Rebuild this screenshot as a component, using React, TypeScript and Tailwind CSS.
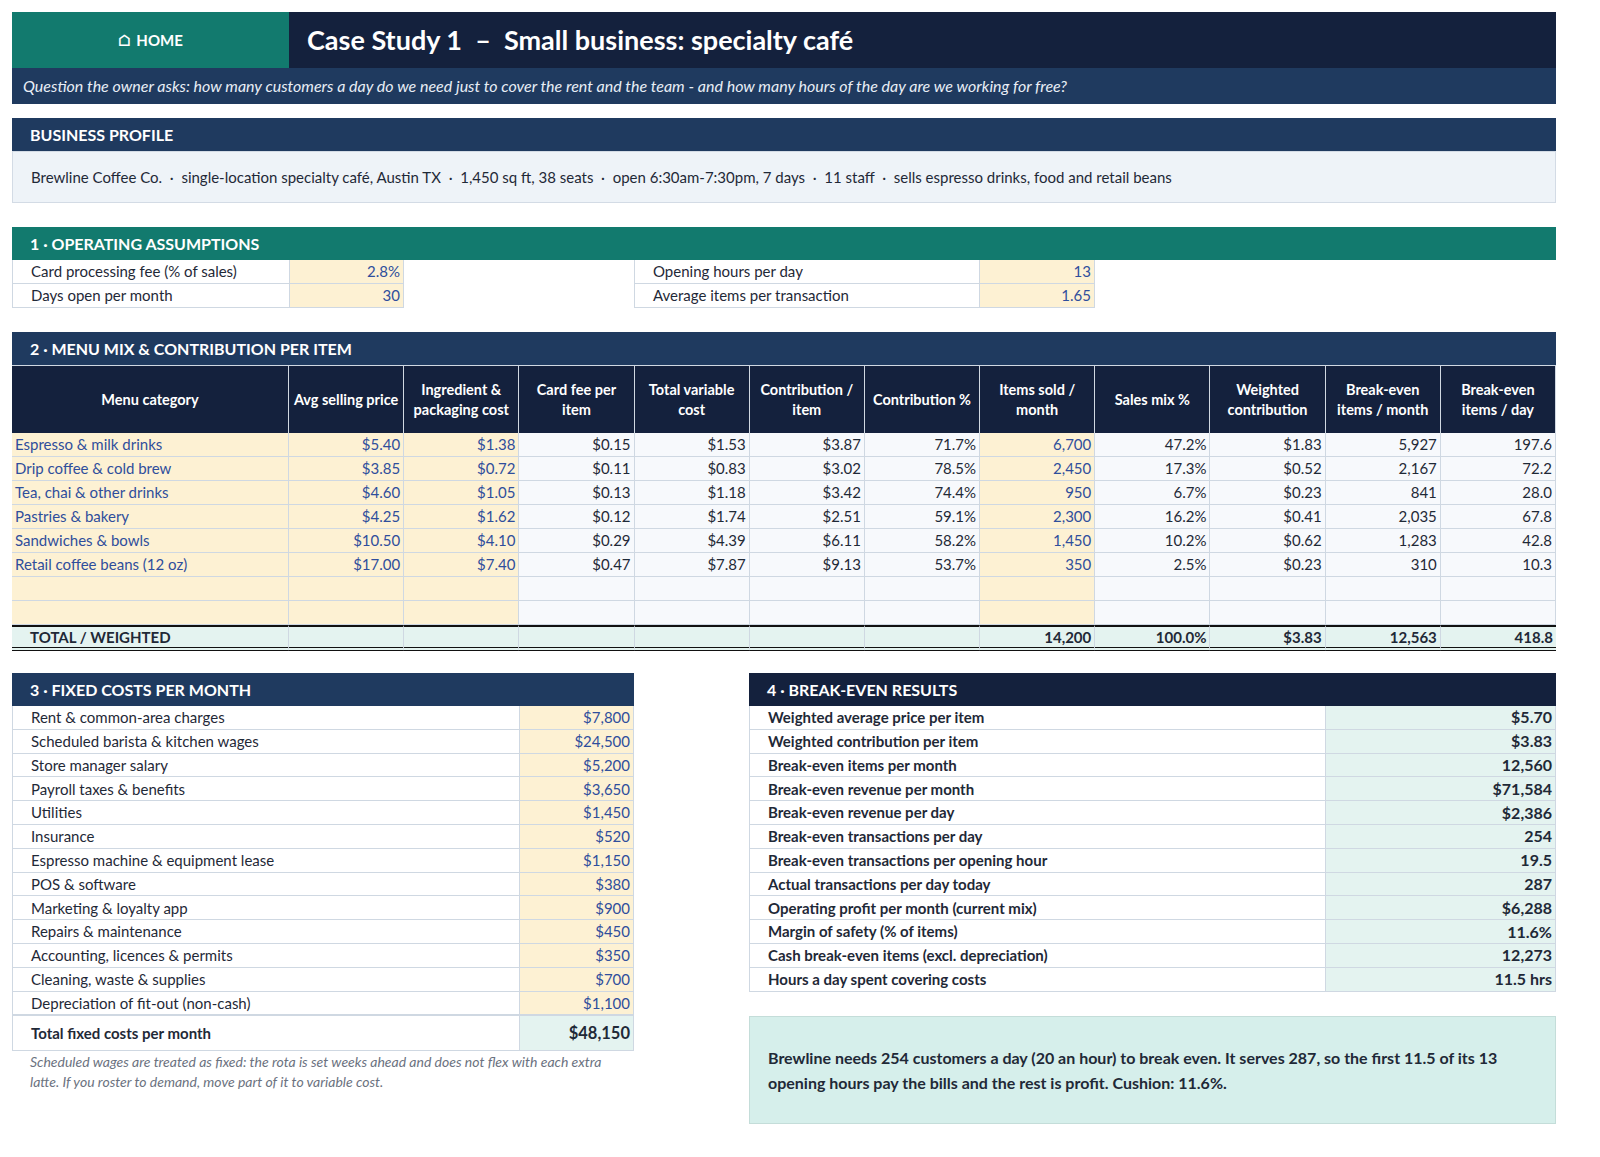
const menu = [
  ["Espresso & milk drinks", "$5.40", "$1.38", "$0.15", "$1.53", "$3.87", "71.7%", "6,700", "47.2%", "$1.83", "5,927", "197.6"],
  ["Drip coffee & cold brew", "$3.85", "$0.72", "$0.11", "$0.83", "$3.02", "78.5%", "2,450", "17.3%", "$0.52", "2,167", "72.2"],
  ["Tea, chai & other drinks", "$4.60", "$1.05", "$0.13", "$1.18", "$3.42", "74.4%", "950", "6.7%", "$0.23", "841", "28.0"],
  ["Pastries & bakery", "$4.25", "$1.62", "$0.12", "$1.74", "$2.51", "59.1%", "2,300", "16.2%", "$0.41", "2,035", "67.8"],
  ["Sandwiches & bowls", "$10.50", "$4.10", "$0.29", "$4.39", "$6.11", "58.2%", "1,450", "10.2%", "$0.62", "1,283", "42.8"],
  ["Retail coffee beans (12 oz)", "$17.00", "$7.40", "$0.47", "$7.87", "$9.13", "53.7%", "350", "2.5%", "$0.23", "310", "10.3"],
  ["", "", "", "", "", "", "", "", "", "", "", ""],
  ["", "", "", "", "", "", "", "", "", "", "", ""],
];

const heads = [
  "Menu category", "Avg selling price", "Ingredient & packaging cost", "Card fee per item", "Total variable cost",
  "Contribution / item", "Contribution %", "Items sold / month", "Sales mix %", "Weighted contribution",
  "Break-even items / month", "Break-even items / day",
];

const inputCols = [0, 1, 2, 7];

const fixed = [
  ["Rent & common-area charges", "$7,800"],
  ["Scheduled barista & kitchen wages", "$24,500"],
  ["Store manager salary", "$5,200"],
  ["Payroll taxes & benefits", "$3,650"],
  ["Utilities", "$1,450"],
  ["Insurance", "$520"],
  ["Espresso machine & equipment lease", "$1,150"],
  ["POS & software", "$380"],
  ["Marketing & loyalty app", "$900"],
  ["Repairs & maintenance", "$450"],
  ["Accounting, licences & permits", "$350"],
  ["Cleaning, waste & supplies", "$700"],
  ["Depreciation of fit-out (non-cash)", "$1,100"],
];

const results = [
  ["Weighted average price per item", "$5.70"],
  ["Weighted contribution per item", "$3.83"],
  ["Break-even items per month", "12,560"],
  ["Break-even revenue per month", "$71,584"],
  ["Break-even revenue per day", "$2,386"],
  ["Break-even transactions per day", "254"],
  ["Break-even transactions per opening hour", "19.5"],
  ["Actual transactions per day today", "287"],
  ["Operating profit per month (current mix)", "$6,288"],
  ["Margin of safety (% of items)", "11.6%"],
  ["Cash break-even items (excl. depreciation)", "12,273"],
  ["Hours a day spent covering costs", "11.5 hrs"],
];

function SectionHead({ title, color }: { title: string; color: string }) {
  return (
    <div className={`${color} text-white font-bold text-[16px] h-[33px] flex items-center px-[18px]`}>{title}</div>
  );
}

export default function App() {
  return (
    <div className="bg-white w-full h-[1157px] overflow-hidden pt-[12px] pl-[12px] text-[#1f2937] text-[15px]" style={{ fontFamily: "Lato, 'Open Sans', sans-serif" }}>
      <div className="w-[1544px]">
        {/* title */}
        <div className="flex h-[56px]">
          <div className="w-[277px] bg-[#127a6e] text-white font-bold text-[15px] flex items-center justify-center gap-1.5">
            <span className="text-[16px]">⌂</span>HOME
          </div>
          <div className="flex-1 bg-[#14213d] text-white font-bold text-[27px] flex items-center px-[18px]">
            Case Study 1 &nbsp;–&nbsp; Small business: specialty café
          </div>
        </div>
        <div className="bg-[#1f3a5f] text-[#e8eef6] italic text-[16px] h-[36px] flex items-center px-[11px]">
          Question the owner asks: how many customers a day do we need just to cover the rent and the team - and how many hours of the day are we working for free?
        </div>

        {/* profile */}
        <div className="mt-[14px]">
          <SectionHead title="BUSINESS PROFILE" color="bg-[#1f3a5f]" />
          <div className="bg-[#eef3f8] border border-[#d3dbe5] h-[52px] flex items-center px-[18px]">
            Brewline Coffee Co. &nbsp;·&nbsp; single-location specialty café, Austin TX &nbsp;·&nbsp; 1,450 sq ft, 38 seats &nbsp;·&nbsp; open 6:30am-7:30pm, 7 days &nbsp;·&nbsp; 11 staff &nbsp;·&nbsp; sells espresso drinks, food and retail beans
          </div>
        </div>

        {/* assumptions */}
        <div className="mt-[24px]">
          <SectionHead title="1 · OPERATING ASSUMPTIONS" color="bg-[#127a6e]" />
          <div className="flex">
            <div className="w-[392px]">
              {[["Card processing fee (% of sales)", "2.8%"], ["Days open per month", "30"]].map(([l, v]) => (
                <div key={l} className="flex h-[24px] border-b border-x border-[#cfd8e2]">
                  <div className="w-[277px] pl-[18px] flex items-center border-r border-[#cfd8e2]">{l}</div>
                  <div className="flex-1 bg-[#fdf1d3] text-[#2f4e9c] flex items-center justify-end pr-[3px]">{v}</div>
                </div>
              ))}
            </div>
            <div className="ml-[230px] w-[461px]">
              {[["Opening hours per day", "13"], ["Average items per transaction", "1.65"]].map(([l, v]) => (
                <div key={l} className="flex h-[24px] border-b border-x border-[#cfd8e2]">
                  <div className="w-[345px] pl-[18px] flex items-center border-r border-[#cfd8e2]">{l}</div>
                  <div className="flex-1 bg-[#fdf1d3] text-[#2f4e9c] flex items-center justify-end pr-[3px]">{v}</div>
                </div>
              ))}
            </div>
          </div>
        </div>

        {/* menu mix */}
        <div className="mt-[24px]">
          <SectionHead title="2 · MENU MIX & CONTRIBUTION PER ITEM" color="bg-[#1f3a5f]" />
          <div className="grid grid-cols-[277px_repeat(11,1fr)]">
            {heads.map((h) => (
              <div key={h} className="bg-[#14213d] text-white font-bold text-[14.5px] leading-[20px] h-[68px] flex items-center justify-center text-center px-1 border-r border-t border-[#d0d8e2]">
                {h}
              </div>
            ))}
            {menu.map((r, i) =>
              r.map((c, j) => (
                <div
                  key={i + "-" + j}
                  className={`h-[24px] flex items-center border-r border-b border-[#cfd8e2] ${j === 0 ? "justify-start pl-[3px]" : "justify-end pr-[3px]"} ${inputCols.includes(j) ? "bg-[#fdf1d3] text-[#2f4e9c]" : j > 2 ? "bg-[#f7f9fc]" : "bg-white"}`}
                >
                  {c}
                </div>
              ))
            )}
            {["TOTAL / WEIGHTED", "", "", "", "", "", "", "14,200", "100.0%", "$3.83", "12,563", "418.8"].map((c, j) => (
              <div
                key={"t" + j}
                className={`h-[26px] flex items-center font-bold bg-[#e4f3f0] border-t-2 border-b-[4px] border-double border-[#111] ${j === 0 ? "pl-[18px]" : "justify-end pr-[3px]"} ${j < 11 ? "border-r border-r-[#cfd8e2] border-r-solid" : ""}`}
              >
                {c}
              </div>
            ))}
          </div>
        </div>

        {/* bottom */}
        <div className="flex mt-[22px] items-start">
          <div className="w-[622px]">
            <SectionHead title="3 · FIXED COSTS PER MONTH" color="bg-[#1f3a5f]" />
            {fixed.map(([l, v]) => (
              <div key={l} className="flex h-[23.8px] border-b border-x border-[#cfd8e2]">
                <div className="w-[507px] pl-[18px] flex items-center border-r border-[#cfd8e2]">{l}</div>
                <div className="flex-1 bg-[#fdf1d3] text-[#2f4e9c] flex items-center justify-end pr-[3px]">{v}</div>
              </div>
            ))}
            <div className="flex h-[36px] border-x border-b border-t border-[#cfd8e2] font-bold">
              <div className="w-[507px] pl-[18px] flex items-center border-r border-[#cfd8e2]">Total fixed costs per month</div>
              <div className="flex-1 bg-[#e4f3f0] flex items-center justify-end pr-[3px] text-[16.5px]">$48,150</div>
            </div>
            <div className="italic text-[14px] text-[#6b7280] leading-[20px] pl-[18px] pr-2 pt-[1px]">
              Scheduled wages are treated as fixed: the rota is set weeks ahead and does not flex with each extra latte. If you roster to demand, move part of it to variable cost.
            </div>
          </div>
          <div className="w-[807px] ml-[115px]">
            <SectionHead title="4 · BREAK-EVEN RESULTS" color="bg-[#14213d]" />
            {results.map(([l, v]) => (
              <div key={l} className="flex h-[23.8px] border-b border-x border-[#cfd8e2] font-bold">
                <div className="w-[576px] pl-[18px] flex items-center border-r border-[#cfd8e2]">{l}</div>
                <div className="flex-1 bg-[#e4f3f0] flex items-center justify-end pr-[3px] text-[16px]">{v}</div>
              </div>
            ))}
            <div className="mt-[24px] h-[108px] bg-[#d6efeb] border border-[#c4ddd9] flex items-center px-[18px] font-bold text-[16px] leading-[25px]">
              Brewline needs 254 customers a day (20 an hour) to break even. It serves 287, so the first 11.5 of its 13 opening hours pay the bills and the rest is profit. Cushion: 11.6%.
            </div>
          </div>
        </div>
      </div>
    </div>
  );
}
